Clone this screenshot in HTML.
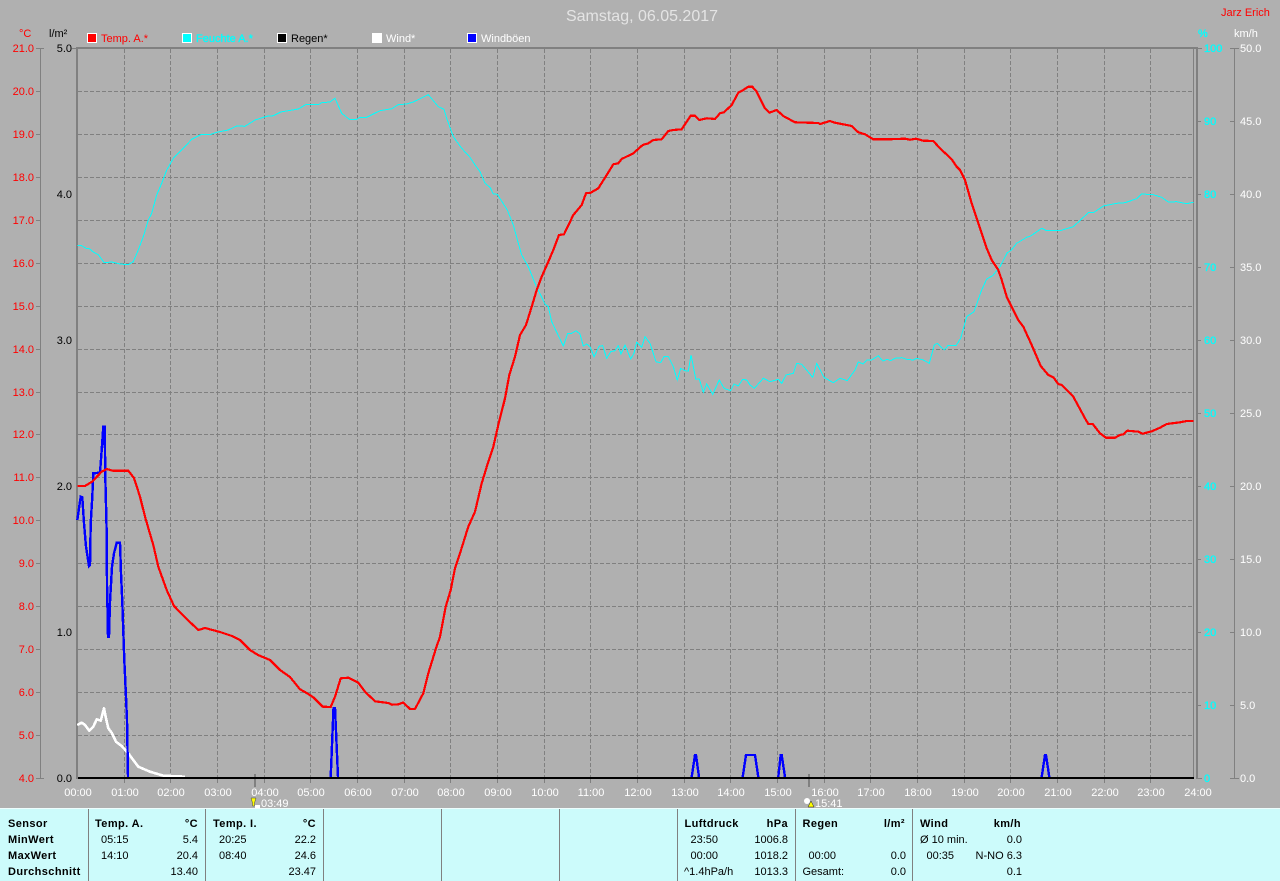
<!DOCTYPE html>
<html lang="de">
<head>
<meta charset="utf-8">
<title>Samstag, 06.05.2017</title>
<style>
html,body{margin:0;padding:0;width:1280px;height:881px;overflow:hidden;background:#b0b0b0}
svg{display:block}
text{font-family:"Liberation Sans",Arial,sans-serif;font-size:11px}
.r{fill:#f00}.k{fill:#000}.c{fill:#0ff;stroke:#0ff;stroke-width:.3px}.w{fill:#fff}
.e{text-anchor:end}
.b{font-weight:bold;letter-spacing:.4px}
.m{text-anchor:middle}
.t text{fill:#000}
</style>
</head>
<body>
<svg width="1280" height="881" viewBox="0 0 1280 881" xmlns="http://www.w3.org/2000/svg">
<rect width="1280" height="881" fill="#b0b0b0"/>
<text x="642" y="21" class="m" style="font-size:16px" fill="#e4e4e4" textLength="152" lengthAdjust="spacingAndGlyphs">Samstag, 06.05.2017</text>
<text x="1221" y="16" class="r">Jarz Erich</text>

<!-- Legend -->
<g stroke="#fff" stroke-width="1" shape-rendering="crispEdges">
<rect x="87.5" y="33.5" width="9" height="9" fill="#f00"/>
<rect x="182.5" y="33.5" width="9" height="9" fill="#0ff"/>
<rect x="277.5" y="33.5" width="9" height="9" fill="#000"/>
<rect x="372.5" y="33.5" width="9" height="9" fill="#fff"/>
<rect x="467.5" y="33.5" width="9" height="9" fill="#00f"/>
</g>
<text x="101" y="42" class="r">Temp. A.*</text>
<text x="196" y="42" class="c">Feuchte A.*</text>
<text x="291" y="42" class="k">Regen*</text>
<text x="386" y="42" class="w">Wind*</text>
<text x="481" y="42" class="w">Windböen</text>

<!-- Units -->
<text x="19" y="37" class="r">°C</text>
<text x="49" y="37" class="k">l/m²</text>
<text x="1198" y="37" class="c">%</text>
<text x="1234" y="37" class="w">km/h</text>

<!-- Grid -->
<path fill="none" stroke="#808080" stroke-width="1" stroke-dasharray="4 2" shape-rendering="crispEdges" d="M78 91.5H1193M78 134.5H1193M78 177.5H1193M78 220.5H1193M78 263.5H1193M78 306.5H1193M78 349.5H1193M78 392.5H1193M78 434.5H1193M78 477.5H1193M78 520.5H1193M78 563.5H1193M78 606.5H1193M78 649.5H1193M78 692.5H1193M78 735.5H1193M124.5 49V777M170.5 49V777M217.5 49V777M264.5 49V777M310.5 49V777M357.5 49V777M404.5 49V777M450.5 49V777M497.5 49V777M544.5 49V777M590.5 49V777M637.5 49V777M684.5 49V777M730.5 49V777M777.5 49V777M824.5 49V777M870.5 49V777M917.5 49V777M964.5 49V777M1010.5 49V777M1057.5 49V777M1104.5 49V777M1150.5 49V777"/>
<path fill="none" stroke="#808080" stroke-width="1" shape-rendering="crispEdges" d="M124.5 778V783M170.5 778V783M217.5 778V783M264.5 778V783M310.5 778V783M357.5 778V783M404.5 778V783M450.5 778V783M497.5 778V783M544.5 778V783M590.5 778V783M637.5 778V783M684.5 778V783M730.5 778V783M777.5 778V783M824.5 778V783M870.5 778V783M917.5 778V783M964.5 778V783M1010.5 778V783M1057.5 778V783M1104.5 778V783M1150.5 778V783"/>

<!-- Frame -->
<g fill="#808080" shape-rendering="crispEdges">
<rect x="76" y="47" width="2" height="732"/>
<rect x="76" y="47" width="1122" height="2"/>
<rect x="1196" y="47" width="2" height="732"/>
<rect x="1193" y="49" width="1" height="729"/>
<rect x="40" y="48" width="1" height="730"/>
<rect x="36" y="48" width="8" height="1"/>
<rect x="36" y="778" width="8" height="1"/>
<rect x="1234" y="48" width="1" height="730"/>
<rect x="1230" y="48" width="9" height="1"/>
<rect x="1230" y="778" width="9" height="1"/>
<rect x="72" y="48" width="4" height="1"/>
<rect x="1198" y="48" width="4" height="1"/>
<rect x="1198" y="778" width="4" height="1"/>
<path d="M36 91h4v1h-4zM36 134h4v1h-4zM36 177h4v1h-4zM36 220h4v1h-4zM36 263h4v1h-4zM36 306h4v1h-4zM36 349h4v1h-4zM36 392h4v1h-4zM36 434h4v1h-4zM36 477h4v1h-4zM36 520h4v1h-4zM36 563h4v1h-4zM36 606h4v1h-4zM36 649h4v1h-4zM36 692h4v1h-4zM36 735h4v1h-4z"/>
<path d="M1198 121h3v1h-3zM1198 194h3v1h-3zM1198 267h3v1h-3zM1198 340h3v1h-3zM1198 413h3v1h-3zM1198 486h3v1h-3zM1198 559h3v1h-3zM1198 632h3v1h-3zM1198 705h3v1h-3z"/>
<path d="M1230 121h4v1h-4zM1230 194h4v1h-4zM1230 267h4v1h-4zM1230 340h4v1h-4zM1230 413h4v1h-4zM1230 486h4v1h-4zM1230 559h4v1h-4zM1230 632h4v1h-4zM1230 705h4v1h-4z"/>
<rect x="254" y="774" width="2" height="13"/>
<rect x="808" y="774" width="2" height="13"/>
</g>

<!-- Temperature labels -->
<g class="r" text-anchor="end">
<text x="34" y="52">21.0</text><text x="34" y="95">20.0</text><text x="34" y="138">19.0</text><text x="34" y="181">18.0</text><text x="34" y="224">17.0</text><text x="34" y="267">16.0</text><text x="34" y="310">15.0</text><text x="34" y="353">14.0</text><text x="34" y="396">13.0</text><text x="34" y="438">12.0</text><text x="34" y="481">11.0</text><text x="34" y="524">10.0</text><text x="34" y="567">9.0</text><text x="34" y="610">8.0</text><text x="34" y="653">7.0</text><text x="34" y="696">6.0</text><text x="34" y="739">5.0</text><text x="34" y="782">4.0</text>
</g>
<g class="k" text-anchor="end">
<text x="72" y="52">5.0</text><text x="72" y="198">4.0</text><text x="72" y="344">3.0</text><text x="72" y="490">2.0</text><text x="72" y="636">1.0</text><text x="72" y="782">0.0</text>
</g>
<g class="c">
<text x="1204" y="52">100</text><text x="1204" y="125">90</text><text x="1204" y="198">80</text><text x="1204" y="271">70</text><text x="1204" y="344">60</text><text x="1204" y="417">50</text><text x="1204" y="490">40</text><text x="1204" y="563">30</text><text x="1204" y="636">20</text><text x="1204" y="709">10</text><text x="1204" y="782">0</text>
</g>
<g class="w">
<text x="1240" y="52">50.0</text><text x="1240" y="125">45.0</text><text x="1240" y="198">40.0</text><text x="1240" y="271">35.0</text><text x="1240" y="344">30.0</text><text x="1240" y="417">25.0</text><text x="1240" y="490">20.0</text><text x="1240" y="563">15.0</text><text x="1240" y="636">10.0</text><text x="1240" y="709">5.0</text><text x="1240" y="782">0.0</text>
</g>

<!-- Time labels -->
<g class="w m" text-anchor="middle">
<text x="78" y="796">00:00</text><text x="125" y="796">01:00</text><text x="171" y="796">02:00</text><text x="218" y="796">03:00</text><text x="265" y="796">04:00</text><text x="311" y="796">05:00</text><text x="358" y="796">06:00</text><text x="405" y="796">07:00</text><text x="451" y="796">08:00</text><text x="498" y="796">09:00</text><text x="545" y="796">10:00</text><text x="591" y="796">11:00</text><text x="638" y="796">12:00</text><text x="685" y="796">13:00</text><text x="731" y="796">14:00</text><text x="778" y="796">15:00</text><text x="825" y="796">16:00</text><text x="871" y="796">17:00</text><text x="918" y="796">18:00</text><text x="965" y="796">19:00</text><text x="1011" y="796">20:00</text><text x="1058" y="796">21:00</text><text x="1105" y="796">22:00</text><text x="1151" y="796">23:00</text><text x="1198" y="796">24:00</text>
</g>

<!-- Humidity -->
<polyline fill="none" stroke="#0ff" stroke-width="1" shape-rendering="crispEdges" points="77.3,245.3 81.7,245.7 86.7,248.7 89.3,248.7 93.3,252 98.3,254.7 104.3,262.7 111.7,262 120,264 128.3,264.7 133.3,261.7 138.3,250 143.3,236.7 148.3,220 151.7,213.3 156.7,195 161.7,183.3 166.7,170 174,157.3 185,146.7 191.7,139.3 201.7,134.3 210,134.7 216.7,132.3 228.3,130 236.7,126 245,126.3 255,120 266.7,116.3 273.3,115.7 280.7,112 298.3,109 305.7,104.7 318.3,104.7 321.7,102.7 330,102 335,98.3 341.7,113.3 349.3,119.3 356.7,119.3 360,117.3 366.7,117.3 380,110.7 391.7,108.7 398.3,104.7 406.7,104 413.3,102 428.3,94.7 438.3,106.7 444,109.3 446.7,118.3 453.3,136.7 461.7,148.3 470,157.3 475,165 480,171.7 485,183.3 490,187.3 493.3,194 497.3,194.3 507.3,210 513.3,225 518.3,243.3 521.7,255 528.3,266.7 535,283.3 545,304 548.3,306.7 551.7,321.7 563.3,346 567.7,333.3 571.7,333.3 576,330.7 580,334 583.3,346 586.7,344 590,346.7 594,356.7 599.3,346 602.7,345.7 606.7,358.3 610.7,351.7 615,350.7 618.3,345.7 621,354 625,345 630.7,359 634,353.3 636.7,342.3 641.7,347.3 645,336.7 650,343.3 656,361.7 660.7,362.7 664,356.7 668.3,356.7 673.3,366.7 677.3,380 680.7,368.3 685,370.7 688.3,371 691,355 692.7,363.3 695.7,379 699.3,379 703.3,392.3 706.7,384 712.7,394.3 719.3,380 724,388.3 730.7,390.7 734,384 738.3,386 742.7,379.3 746.7,380 750,385 754.3,388.3 763.3,378.3 770,381.7 778.3,379.3 781.7,383.3 786,375 793.3,373.3 796.7,363.3 801.7,364.3 812.7,377.3 816.7,363.3 824,377.3 833.3,382.7 840,378.3 847.3,380.7 855,370 858.3,362 863.3,364 866.7,360 871.7,360 878.3,355.7 882.7,361 887.3,359.3 890.7,360.7 895,358.3 901.7,357.7 906.7,359.3 913.3,360 916.7,358.3 923.3,360 929.3,363.3 934.3,345 937.3,343.3 944.3,350 948.3,345.3 956,345.7 960.7,338.3 966.7,316.7 974,311.7 981.7,290 986.7,279 992.7,275.7 1000,266.7 1007.3,252.7 1010.7,250.7 1016.7,243.3 1026.7,237.3 1030.7,236 1041.7,228.3 1046.7,230.7 1060,230.7 1073.3,226.7 1088.3,212.7 1093.3,212.7 1103.3,206 1116.7,203.3 1125,202.7 1136.7,198.7 1141.7,194 1153.3,194.7 1161.7,197.3 1168.3,202 1176.7,201.7 1186.7,203.7 1193.3,202.3"/>

<!-- Wind -->
<polyline fill="none" stroke="#fff" stroke-width="2.6" stroke-linejoin="round" shape-rendering="crispEdges" points="77.3,725 81.7,722.7 85,725 89.3,730.7 93.3,726.7 96.7,719.3 100.7,720.7 104,708.3 106,718.3 108.3,728.3 111.7,732.7 116,741.7 121.7,746 128.3,753.3 138.3,766.7 150,771.7 163.3,775.7 185,776.7"/>

<!-- Gusts -->
<g fill="none" stroke="#00f" stroke-width="2.4" shape-rendering="crispEdges">
<polyline points="77.3,520 80.7,496.7 82.3,497.3 84,523.3 86,546.7 89,566 90,565 90.7,523.3 92.3,496.7 93.3,473.3 100,472.7 101.7,450 103.3,426.7 104.7,426.7 105.3,476.7 106.7,533.3 107,583.3 108,636.7 109,636.7 110,601.7 112,566.7 114,553.3 116.7,542.7 120,542.7 121,573.3 122.3,601.7 123.3,631.7 124.3,660 125.7,690 127,720 128,777"/>
<polyline points="330.7,777 333.5,708 335,708 338,777"/>
<polyline points="691.7,777 695,755 696,755 699,777"/>
<polyline points="742.7,777 746,755 755,755 758.3,777"/>
<polyline points="778.3,777 780.7,755 781.7,755 785,777"/>
<polyline points="1041.7,777 1045,755 1046,755 1049.3,777"/>
</g>

<!-- Baseline -->
<rect x="78" y="777" width="1116" height="2" fill="#000" shape-rendering="crispEdges"/>

<!-- Temperature -->
<polyline fill="none" stroke="#f00" stroke-width="2.2" stroke-linejoin="round" shape-rendering="crispEdges" points="77.3,486 85,486 92,481.7 101.7,471.7 106.7,469 112.7,470.7 128.3,470.7 134,478 140,496.7 145,516.7 148.3,528 153.3,545 158.3,566.7 166.7,590 174,606 186.7,619 198.3,630 205,628 220,632 232,636 240,640 250,650 258,655 270,660 280,670 290,677 300,689.3 305,692 313.3,697.3 322.7,706.7 330.7,707 335,696.7 340.7,678.3 348.3,677.7 358.3,682.7 365,691.7 375,701.3 388.3,703 391.7,704.7 398.3,704.3 403.3,702.5 410,709 415,709 423.3,693.3 428.3,673.3 436,648.3 440,636.7 445.7,606.7 450.7,590 455,568.3 460,553.3 468.3,526.7 475,511.7 481.7,483.3 488.3,461.7 493.3,446.7 498.3,425 505,398.3 509.3,375 515,356.7 520,335 526,325 531.7,306.7 536.7,290 541.7,276.7 548.3,261.7 553.3,250 559,235 564,234.3 573.3,215 581.7,205 586,193.3 590.7,192.7 598.3,188.3 606.7,175 613.3,164.3 618.3,163.3 621.7,159 633.3,153.3 642.7,145 648.3,143.3 653.3,140 661.7,139.3 668.3,131 673.3,130 681.7,129.3 690.7,115.7 695,115.7 699.3,120 706.7,118.3 715,119 720,113.3 724,112.3 731.7,105 738.3,92.7 743.3,90 748.3,86.7 752.3,86.7 756.7,91.7 765,108.3 769.3,112.7 776.7,110 783.3,116 795,122.3 818.3,123 820,124 830,121 835,122.7 851.7,126 858.3,132.3 865,134.3 873.3,139.3 888.3,139.3 905,138.7 910,139.7 916,138.7 923.3,140.7 933.3,141 940,148.3 951.7,159.3 956.7,166.7 960,170 965,180 971.7,203.3 978.3,223.3 986.7,248.3 991.7,260 998.3,270 1001.7,280 1006.7,296.7 1018.3,320 1023.3,326.7 1031.7,345 1040.7,366 1048.3,375 1053.3,377.3 1058.3,384 1061.7,385 1073.3,396.7 1085,418.3 1088.3,424 1092.7,424 1100,433.3 1106,437.7 1115,437.7 1120,435 1123.3,434.3 1127.3,430.7 1138.3,431.7 1142.7,433.7 1151.7,431.3 1160,427.7 1166.7,424 1180,422.3 1186.7,421 1193.3,421"/>

<!-- Sunrise / sunset markers -->
<path d="M251 798h5l-1.5 5v3h-2v-3z" fill="#ff0" stroke="#444" stroke-width=".5"/>
<rect x="255" y="805" width="5" height="3" fill="#fff"/>
<text x="261" y="807" class="w">03:49</text>
<circle cx="807" cy="801" r="3" fill="#fff"/>
<path d="M811 801l3 6h-6z" fill="#ff0" stroke="#222" stroke-width=".5"/>
<text x="815" y="807" class="w">15:41</text>

<!-- Table -->
<rect x="0" y="808" width="1280" height="73" fill="#ccfbfb"/>
<rect x="0" y="808" width="1280" height="1" fill="#eefefe"/>
<path fill="#808080" shape-rendering="crispEdges" d="M88 809h1v72h-1zM205 809h1v72h-1zM323 809h1v72h-1zM441 809h1v72h-1zM559 809h1v72h-1zM677 809h1v72h-1zM795 809h1v72h-1zM912 809h1v72h-1z"/>
<g class="t">
<text x="8" y="827" class="b">Sensor</text>
<text x="8" y="843" class="b">MinWert</text>
<text x="8" y="859" class="b">MaxWert</text>
<text x="8" y="875" class="b">Durchschnitt</text>

<text x="95" y="827" class="b">Temp. A.</text>
<text x="198" y="827" class="b e">°C</text>
<text x="101" y="843">05:15</text><text x="198" y="843" class="e">5.4</text>
<text x="101" y="859">14:10</text><text x="198" y="859" class="e">20.4</text>
<text x="198" y="875" class="e">13.40</text>

<text x="213" y="827" class="b">Temp. I.</text>
<text x="316" y="827" class="b e">°C</text>
<text x="219" y="843">20:25</text><text x="316" y="843" class="e">22.2</text>
<text x="219" y="859">08:40</text><text x="316" y="859" class="e">24.6</text>
<text x="316" y="875" class="e">23.47</text>

<text x="684.5" y="827" class="b">Luftdruck</text>
<text x="788" y="827" class="b e">hPa</text>
<text x="690.5" y="843">23:50</text><text x="788" y="843" class="e">1006.8</text>
<text x="690.5" y="859">00:00</text><text x="788" y="859" class="e">1018.2</text>
<text x="684" y="875">^1.4hPa/h</text><text x="788" y="875" class="e">1013.3</text>

<text x="802.5" y="827" class="b">Regen</text>
<text x="905" y="827" class="b e">l/m²</text>
<text x="808.5" y="859">00:00</text><text x="906" y="859" class="e">0.0</text>
<text x="802.5" y="875">Gesamt:</text><text x="906" y="875" class="e">0.0</text>

<text x="920" y="827" class="b">Wind</text>
<text x="1021" y="827" class="b e">km/h</text>
<text x="920" y="843">Ø 10 min.</text><text x="1022" y="843" class="e">0.0</text>
<text x="926.5" y="859">00:35</text><text x="1022" y="859" class="e">N-NO 6.3</text>
<text x="1022" y="875" class="e">0.1</text>
</g>
</svg>
</body>
</html>
